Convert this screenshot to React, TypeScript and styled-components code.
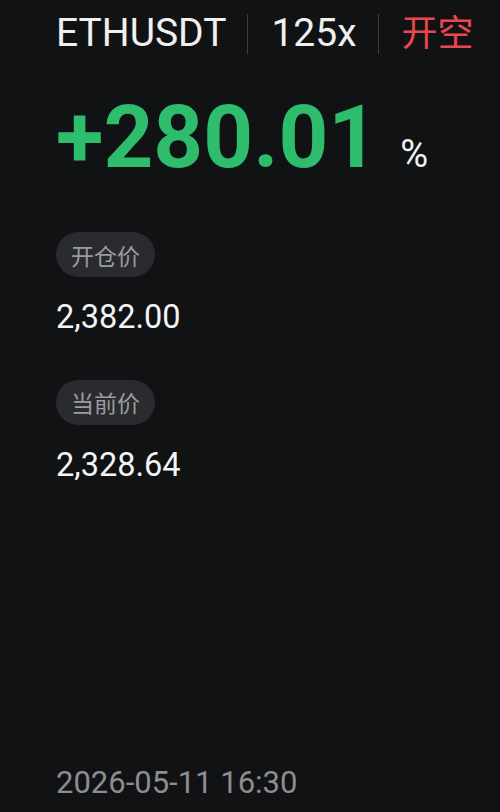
import React from "react";
import styled, { createGlobalStyle } from "styled-components";

const Global = createGlobalStyle`
  html, body { margin: 0; padding: 0; background: #111214; }
  body { font-family: Roboto, "Noto Sans CJK SC", sans-serif; }
`;

const Page = styled.div`
  box-sizing: border-box;
  width: 500px;
  height: 812px;
  padding: 14px 0 14px 56px;
  display: flex;
  flex-direction: column;
  background: #111214;
  color: #f2f2f2;
  overflow: hidden;
`;

const Header = styled.div`
  display: flex;
  align-items: center;
  height: 39px;
  font-size: 39px;
  line-height: 1;
`;

const HeadText = styled.span<{ $red?: boolean }>`
  color: ${(p) => (p.$red ? "#e9464e" : "#f0f0f0")};
  font-family: Roboto, "Noto Sans CJK SC", sans-serif;
  font-size: ${(p) => (p.$red ? "36px" : "39px")};
`;

const Sep = styled.div`
  width: 1px;
  height: 40px;
  background: #3b3c3f;
  margin: 0 23px 0 21px;
`;

const Profit = styled.div`
  display: flex;
  align-items: baseline;
  margin-top: 41px;
  line-height: 1;
`;

const Big = styled.span`
  font-size: 87px;
  font-weight: 700;
  color: #2ebd6c;
`;

const Pct = styled.span`
  font-size: 38px;
  color: #f2f2f2;
  margin-left: 22px;
`;

const Badge = styled.div<{ $mt: number }>`
  align-self: flex-start;
  box-sizing: border-box;
  height: 45px;
  padding: 0 15px;
  margin-top: ${(p) => p.$mt}px;
  display: flex;
  align-items: center;
  border-radius: 23px;
  background: #2a2b2e;
  color: #9b9c9e;
  font-size: 23px;
  font-family: "Noto Sans CJK SC", sans-serif;
`;

const Value = styled.div`
  margin-top: 24px;
  font-size: 32.5px;
  line-height: 1;
  color: #f4f4f4;
`;

const DateText = styled.div`
  margin-top: auto;
  font-size: 31px;
  line-height: 1;
  color: #8c8d90;
`;

export default function App() {
  return (
    <>
      <Global />
      <Page>
        <Header>
          <HeadText>ETHUSDT</HeadText>
          <Sep />
          <HeadText>125x</HeadText>
          <Sep />
          <HeadText $red>开空</HeadText>
        </Header>
        <Profit>
          <Big>+280.01</Big>
          <Pct>%</Pct>
        </Profit>
        <Badge $mt={51}>开仓价</Badge>
        <Value>2,382.00</Value>
        <Badge $mt={46}>当前价</Badge>
        <Value>2,328.64</Value>
        <DateText>2026-05-11 16:30</DateText>
      </Page>
    </>
  );
}
